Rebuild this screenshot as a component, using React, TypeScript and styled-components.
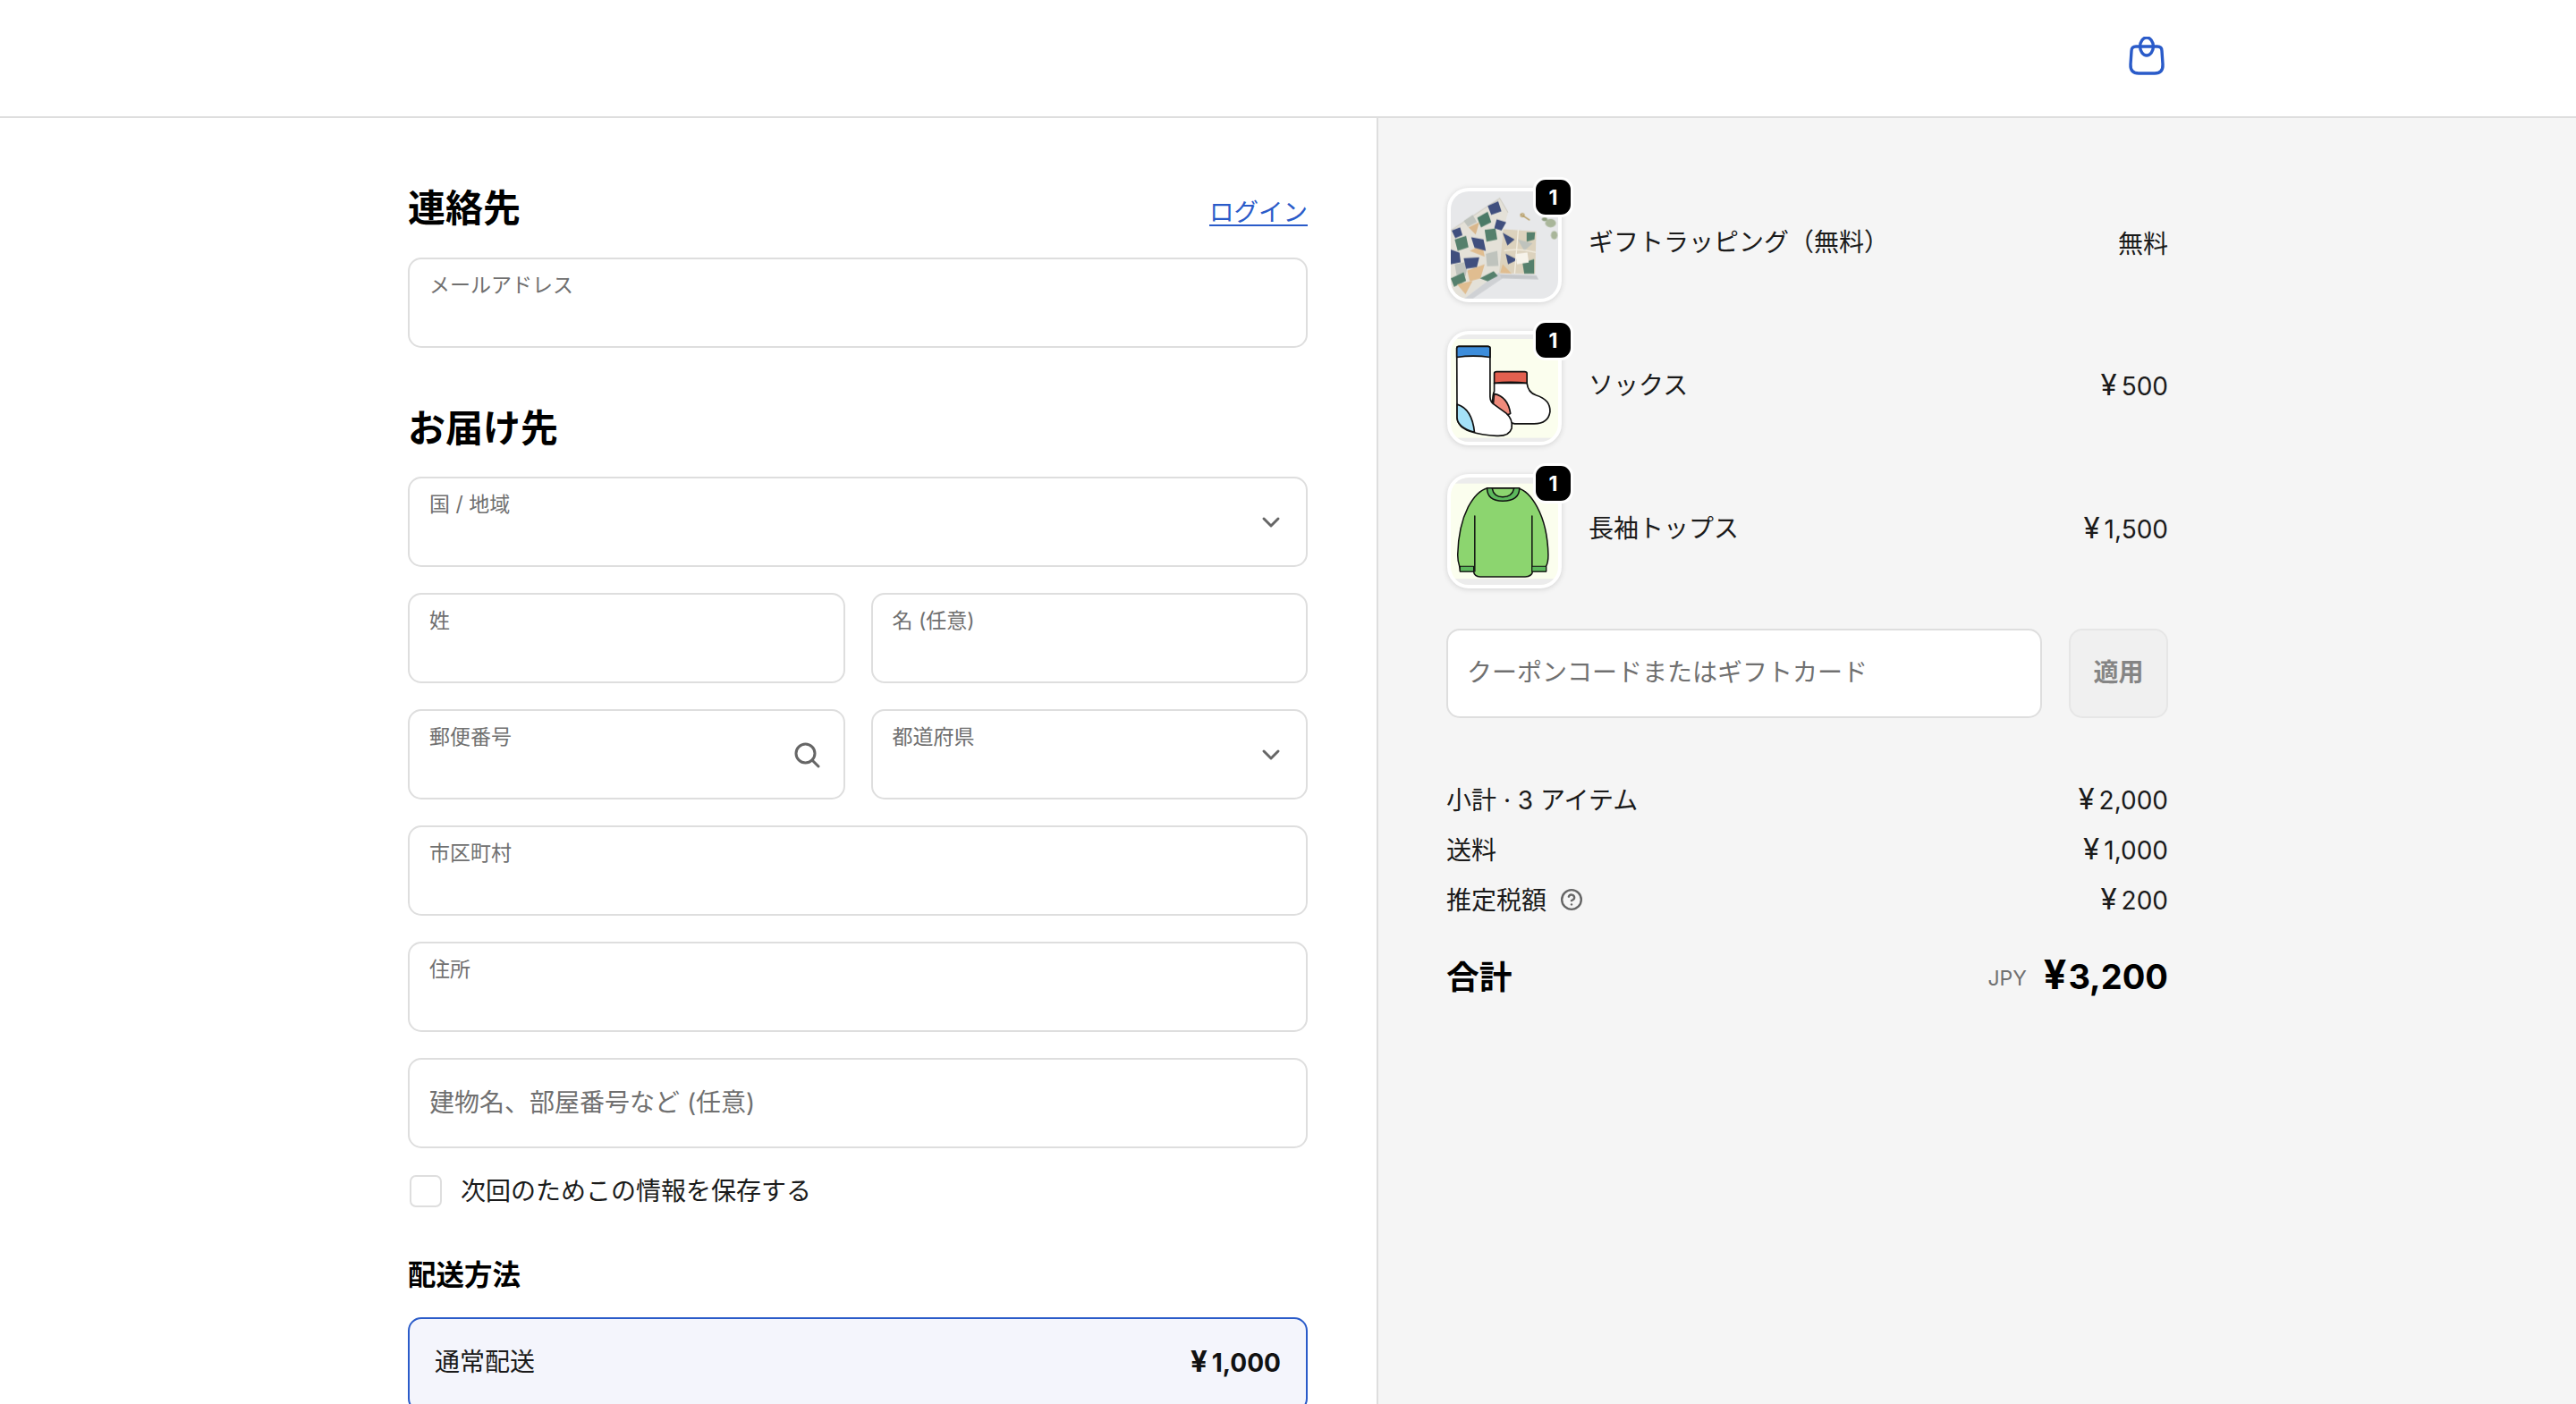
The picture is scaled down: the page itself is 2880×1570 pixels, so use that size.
import React from "react";
import styled, { createGlobalStyle } from "styled-components";
import { CircleHelp } from "lucide-react";

const GlobalStyle = createGlobalStyle`
  html, body {
    margin: 0;
    padding: 0;
    height: 1570px;
    overflow: hidden;
    background: #fff;
    font-family: Inter, "Noto Sans CJK JP", sans-serif;
    color: #1a1a1a;
  }
  * { box-sizing: border-box; }
`;

const Page = styled.div`
  width: 2880px;
  height: 1570px;
  overflow: hidden;
`;

const Header = styled.header`
  height: 132px;
  border-bottom: 2px solid #dedede;
  display: flex;
  align-items: center;
  justify-content: flex-end;
  padding-right: 456px;
`;

const Columns = styled.div`
  display: grid;
  grid-template-columns: 1539px 1fr;
  height: 1438px;
`;

const Main = styled.main`
  padding: 71px 77px 0 456px;
`;

const Aside = styled.aside`
  background: #f5f5f5;
  border-left: 2px solid #dedede;
  padding: 78px 456px 0 76px;
`;

const SectionRow = styled.div`
  display: flex;
  justify-content: space-between;
  align-items: flex-end;
  height: 60px;
  margin-bottom: 25px;
`;

const Heading = styled.h2<{ $top?: number }>`
  margin: ${(p) => p.$top ?? 0}px 0 24px;
  font-size: 42px;
  line-height: 60px;
  font-weight: 700;
  color: #000;
`;

const ContactHeading = styled(Heading)`
  margin: 0;
`;

const LoginLink = styled.a`
  color: #2a5bc9;
  font-size: 27.5px;
  line-height: 38px;
  text-decoration: underline;
  text-underline-offset: 4px;
  margin-bottom: 7px;
`;

const FieldStack = styled.div`
  display: flex;
  flex-direction: column;
  gap: 29px;
`;

const FieldRow = styled.div`
  display: grid;
  grid-template-columns: 1fr 1fr;
  gap: 29px;
`;

const Field = styled.div`
  height: 101px;
  background: #fff;
  border: 2px solid #dedede;
  border-radius: 15px;
  padding: 0 26px 0 22px;
  display: flex;
  align-items: center;
  justify-content: space-between;
`;

const FieldLabel = styled.span`
  align-self: flex-start;
  margin-top: 14px;
  font-size: 23px;
  line-height: 30px;
  color: #707070;
`;

const Placeholder = styled.span`
  font-size: 28px;
  line-height: 38px;
  padding-bottom: 2px;
  color: #707070;
`;

const FieldIcon = styled.svg`
  flex: none;
  fill: none;
  stroke: #666;
  stroke-width: 3;
  stroke-linecap: round;
  stroke-linejoin: round;
`;

const CheckRow = styled.label`
  display: flex;
  align-items: center;
  gap: 21px;
  margin-top: 30px;
  font-size: 28px;
  line-height: 36px;
`;

const CheckBox = styled.span`
  width: 36px;
  height: 36px;
  margin-left: 2px;
  background: #fff;
  border: 2px solid #dedede;
  border-radius: 7px;
`;

const SubHeading = styled.h3`
  margin: 51px 0 22px;
  font-size: 31.5px;
  line-height: 50px;
  font-weight: 700;
  color: #000;
`;

const ShippingOption = styled.div`
  height: 106px;
  background: #f4f5fc;
  border: 2px solid #2a5bc9;
  border-radius: 15px;
  padding: 0 28px;
  display: flex;
  align-items: center;
  justify-content: space-between;
  font-size: 28px;
`;

const ShippingName = styled.span`
  padding-bottom: 10px;
`;

const ShippingPrice = styled.strong`
  font-weight: 700;
  color: #111;
  padding-bottom: 5px;
`;

const ItemList = styled.ul`
  list-style: none;
  margin: 0 0 45px;
  padding: 0;
  display: flex;
  flex-direction: column;
  gap: 32px;
`;

const Item = styled.li`
  display: flex;
  align-items: center;
  height: 128px;
  font-size: 28px;
`;

const Thumb = styled.div`
  position: relative;
  flex: none;
  width: 128px;
  height: 128px;
  margin: 0 30px 0 1px;
  background: #fff;
  border: 4px solid #fff;
  border-radius: 24px;
  box-shadow: 0 1px 6px rgba(0, 0, 0, 0.14);
`;

const ThumbArt = styled.svg`
  display: block;
  width: 120px;
  height: 120px;
  border-radius: 20px;
`;

const Badge = styled.span`
  position: absolute;
  top: -16px;
  right: -17px;
  width: 45px;
  height: 45px;
  background: #000;
  border: 3px solid #fff;
  border-radius: 14px;
  color: #fff;
  font-size: 23px;
  font-weight: 700;
  display: flex;
  align-items: center;
  justify-content: center;
`;

const ItemName = styled.span`
  flex: 1;
  padding-bottom: 11px;
`;

const ItemPrice = styled.span`
  padding-bottom: 6px;
`;

const Yen = styled.span`
  font-size: 1.18em;
  line-height: 1;
  margin-right: 5px;
`;

const CouponRow = styled.div`
  display: flex;
  gap: 30px;
  margin-bottom: 65px;
`;

const CouponField = styled(Field)`
  flex: 1;
  height: 100px;
  padding-left: 21px;
`;

const ApplyButton = styled.button`
  width: 111px;
  height: 100px;
  padding: 0 0 6px;
  background: #f0f0f0;
  border: 2px solid #e6e6e6;
  border-radius: 15px;
  color: #858585;
  font-family: inherit;
  font-size: 28px;
  font-weight: 700;
`;

const SummaryRow = styled.div`
  display: flex;
  align-items: center;
  justify-content: space-between;
  height: 56px;
  font-size: 28px;
`;

const SummaryLabel = styled.span`
  display: flex;
  align-items: center;
  gap: 15px;
  padding-bottom: 7px;
`;

const HelpIcon = styled(CircleHelp)`
  margin-top: 3px;
`;

const SummaryPrice = styled.span`
  padding-bottom: 4px;
`;

const TotalRow = styled.div`
  display: flex;
  align-items: center;
  justify-content: space-between;
  height: 60px;
  margin-top: 27px;
`;

const TotalLabel = styled.strong`
  font-size: 36.7px;
  font-weight: 700;
  color: #000;
  padding-bottom: 7px;
`;

const TotalAmount = styled.div`
  display: flex;
  align-items: center;
  gap: 19px;
  padding-bottom: 4px;
`;

const Currency = styled.span`
  font-size: 23px;
  color: #707070;
  margin-top: 6px;
`;

const TotalPrice = styled.strong`
  font-size: 38px;
  font-weight: 700;
  color: #000;
`;

const TotalYen = styled(Yen)`
  margin-right: 2px;
`;

const BagIcon = () => (
  <svg width="48" height="48" viewBox="0 0 48 48" fill="none" stroke="#2a5bc9" strokeWidth="3.4">
    <ellipse cx="24" cy="11" rx="7.4" ry="10" />
    <path d="M12 11H36Q41 11 41 16L42 31Q42.5 41 33 41H15Q5.5 41 6 31L7 16Q7 11 12 11Z" />
  </svg>
);

const Chevron = () => (
  <FieldIcon width="22" height="14" viewBox="0 0 22 14" style={{ marginRight: 2 }}>
    <path d="M3 3l8 8 8-8" />
  </FieldIcon>
);

const SearchIcon = () => (
  <FieldIcon width="30" height="30" viewBox="0 0 30 30">
    <circle cx="13.5" cy="13.5" r="10.5" />
    <path d="M21 21l7 7" />
  </FieldIcon>
);

const paperShapes: [string, string][] = [
  ["#3f4f7e", "130,232 158,222 166,248 142,258"],
  ["#55806c", "140,262 178,250 186,288 150,300"],
  ["#d9b78c", "186,222 222,205 210,246"],
  ["#4c7a66", "215,190 250,170 262,205 228,222"],
  ["#3f4f7e", "250,150 285,135 296,168 262,180"],
  ["#bfc3bd", "170,200 200,180 214,204 184,220"],
  ["#3f4f7e", "280,195 312,205 296,232 272,225"],
  ["#55806c", "240,230 276,226 282,262 246,270"],
  ["#e0bd90", "190,300 232,280 240,320"],
  ["#3f4f7e", "127,296 156,306 160,338 127,345"],
  ["#3f4f7e", "195,255 236,262 244,300 206,290"],
  ["#bfc3bd", "140,345 186,335 176,385 146,380"],
  ["#3f4f7e", "170,325 222,322 214,355 178,360"],
  ["#e0bd90", "182,366 240,345 226,392 190,402"],
  ["#55806c", "127,392 170,372 178,400 138,420"],
  ["#e0bd90", "148,412 200,400 176,445"],
  ["#55806c", "224,392 270,368 284,384 250,402"],
  ["#bfc3bd", "244,310 282,300 286,350 248,352"],
];

const boxShapes: [string, string][] = [
  ["#3f4f7e", "300,240 340,262 316,282"],
  ["#55806c", "380,238 408,238 406,262 380,270"],
  ["#bfc3bd", "350,262 400,275 372,300"],
  ["#3f4f7e", "310,310 350,330 318,345"],
  ["#55806c", "366,340 405,328 405,376 372,376"],
  ["#e0bd90", "300,345 330,376 292,374"],
];

const GiftArt = () => (
  <ThumbArt viewBox="127 102 358 358">
    <defs>
      <filter id="soft">
        <feGaussianBlur stdDeviation="1.6" />
      </filter>
    </defs>
    <rect x="127" y="102" width="358" height="358" fill="#e7e8ea" />
    <g filter="url(#soft)">
      <polygon points="127,232 290,125 318,172 302,228 288,372 172,460 127,460" fill="#e4e1d8" />
      <path d="M127 232L290 125L318 172" fill="none" stroke="#cfcdc4" strokeWidth="3" />
      <polygon points="127,460 172,460 288,372 300,392 200,460" fill="#cfd1d4" />
      {paperShapes.map(([color, pts]) => (
        <polygon key={pts} points={pts} fill={color} />
      ))}
      <polygon points="290,378 412,382 420,396 296,392" fill="#c6c8cb" />
      <polygon points="302,228 412,235 408,378 288,375" fill="#dcd2bd" />
      {boxShapes.map(([color, pts]) => (
        <polygon key={pts} points={pts} fill={color} />
      ))}
      <path d="M305 300Q350 290 410 305M352 230L340 376" stroke="#f4efe2" strokeWidth="4" fill="none" />
      <rect x="345" y="308" width="40" height="34" fill="#f6f3ea" transform="rotate(-8 365 325)" />
      <path d="M360 178l30 20" stroke="#b59a5e" strokeWidth="4" />
      <circle cx="366" cy="181" r="6" fill="none" stroke="#b59a5e" strokeWidth="3" />
      <ellipse cx="460" cy="208" rx="18" ry="14" fill="#a9b69a" />
      <ellipse cx="472" cy="248" rx="11" ry="14" fill="#a9b69a" />
      <ellipse cx="440" cy="195" rx="9" ry="6" fill="#8f9e7f" />
    </g>
  </ThumbArt>
);

const SocksArt = () => (
  <ThumbArt viewBox="127 582 358 358">
    <rect x="127" y="582" width="358" height="358" fill="#fbfeee" />
    <rect x="127" y="582" width="358" height="15" fill="#ececec" />
    <rect x="127" y="927" width="358" height="13" fill="#ececec" />
    <g stroke="#111" strokeWidth="5" strokeLinejoin="round">
      <path d="M272 744V772Q262 790 270 860L340 880H400Q452 882 458 840Q460 800 412 785Q384 775 381 744Z" fill="#fff" />
      <path d="M272 780Q318 790 326 846L290 860L268 820Z" fill="#f08b7c" />
      <path d="M272 712Q272 706 280 706H373Q381 706 381 712V744Q326 738 272 744Z" fill="#e2604f" />
      <path d="M147 628Q147 622 155 622H250Q258 622 258 628V790Q258 808 275 818L312 845Q335 865 330 895Q322 922 280 920Q230 918 190 905Q150 890 148 860Z" fill="#fff" />
      <path d="M148 815Q198 830 206 908Q150 892 148 860Z" fill="#a4e1f7" />
      <path d="M147 628Q147 622 155 622H250Q258 622 258 628V658Q202 650 147 658Z" fill="#3d8ddb" />
    </g>
  </ThumbArt>
);

const SweaterArt = () => (
  <ThumbArt viewBox="127 1062 358 358">
    <rect x="127" y="1062" width="358" height="358" fill="#fbfeee" />
    <rect x="127" y="1062" width="358" height="20" fill="#ececec" />
    <rect x="127" y="1400" width="358" height="20" fill="#ececec" />
    <g stroke="#111" strokeWidth="4.5" strokeLinejoin="round" strokeLinecap="round">
      <path d="M250 1097H350Q385 1105 415 1160Q450 1225 452 1320Q452 1345 445 1358V1375H400Q398 1392 375 1393H225Q205 1392 203 1375H158L156 1358Q150 1340 150 1320Q152 1225 185 1160Q215 1105 250 1097Z" fill="#8cd56f" />
      <path d="M248 1097Q248 1140 300 1140Q356 1140 356 1097Z" fill="#5cb85c" />
      <path d="M265 1098Q270 1126 300 1127Q332 1126 338 1098Z" fill="#8cd56f" />
      <path d="M207 1190V1375M398 1190V1375" fill="none" />
      <path d="M158 1358H203V1375H158ZM398 1358H445V1375H398Z" fill="#5cb85c" strokeWidth="3" />
    </g>
  </ThumbArt>
);

const items = [
  { name: "ギフトラッピング（無料）", price: "無料", art: <GiftArt /> },
  { name: "ソックス", price: "500", yen: true, art: <SocksArt /> },
  { name: "長袖トップス", price: "1,500", yen: true, art: <SweaterArt /> },
];

const summary = [
  { label: "小計 · 3 アイテム", price: "2,000" },
  { label: "送料", price: "1,000" },
  { label: "推定税額", price: "200", help: true },
];

export default function App() {
  return (
    <Page>
      <GlobalStyle />
      <Header>
        <BagIcon />
      </Header>
      <Columns>
        <Main>
          <SectionRow>
            <ContactHeading>連絡先</ContactHeading>
            <LoginLink href="#">ログイン</LoginLink>
          </SectionRow>
          <Field>
            <FieldLabel>メールアドレス</FieldLabel>
          </Field>

          <Heading $top={60}>お届け先</Heading>
          <FieldStack>
            <Field>
              <FieldLabel>国 / 地域</FieldLabel>
              <Chevron />
            </Field>
            <FieldRow>
              <Field>
                <FieldLabel>姓</FieldLabel>
              </Field>
              <Field>
                <FieldLabel>名 (任意)</FieldLabel>
              </Field>
            </FieldRow>
            <FieldRow>
              <Field>
                <FieldLabel>郵便番号</FieldLabel>
                <SearchIcon />
              </Field>
              <Field>
                <FieldLabel>都道府県</FieldLabel>
                <Chevron />
              </Field>
            </FieldRow>
            <Field>
              <FieldLabel>市区町村</FieldLabel>
            </Field>
            <Field>
              <FieldLabel>住所</FieldLabel>
            </Field>
            <Field>
              <Placeholder>建物名、部屋番号など (任意)</Placeholder>
            </Field>
          </FieldStack>

          <CheckRow>
            <CheckBox />
            次回のためこの情報を保存する
          </CheckRow>

          <SubHeading>配送方法</SubHeading>
          <ShippingOption>
            <ShippingName>通常配送</ShippingName>
            <ShippingPrice>
              <Yen>¥</Yen>1,000
            </ShippingPrice>
          </ShippingOption>
        </Main>

        <Aside>
          <ItemList>
            {items.map((item) => (
              <Item key={item.name}>
                <Thumb>
                  {item.art}
                  <Badge>1</Badge>
                </Thumb>
                <ItemName>{item.name}</ItemName>
                <ItemPrice>
                  {item.yen && <Yen>¥</Yen>}
                  {item.price}
                </ItemPrice>
              </Item>
            ))}
          </ItemList>

          <CouponRow>
            <CouponField>
              <Placeholder>クーポンコードまたはギフトカード</Placeholder>
            </CouponField>
            <ApplyButton>適用</ApplyButton>
          </CouponRow>

          {summary.map((row) => (
            <SummaryRow key={row.label}>
              <SummaryLabel>
                {row.label}
                {row.help && <HelpIcon size={26} color="#666" strokeWidth={2.2} />}
              </SummaryLabel>
              <SummaryPrice>
                <Yen>¥</Yen>
                {row.price}
              </SummaryPrice>
            </SummaryRow>
          ))}

          <TotalRow>
            <TotalLabel>合計</TotalLabel>
            <TotalAmount>
              <Currency>JPY</Currency>
              <TotalPrice>
                <TotalYen>¥</TotalYen>3,200
              </TotalPrice>
            </TotalAmount>
          </TotalRow>
        </Aside>
      </Columns>
    </Page>
  );
}
